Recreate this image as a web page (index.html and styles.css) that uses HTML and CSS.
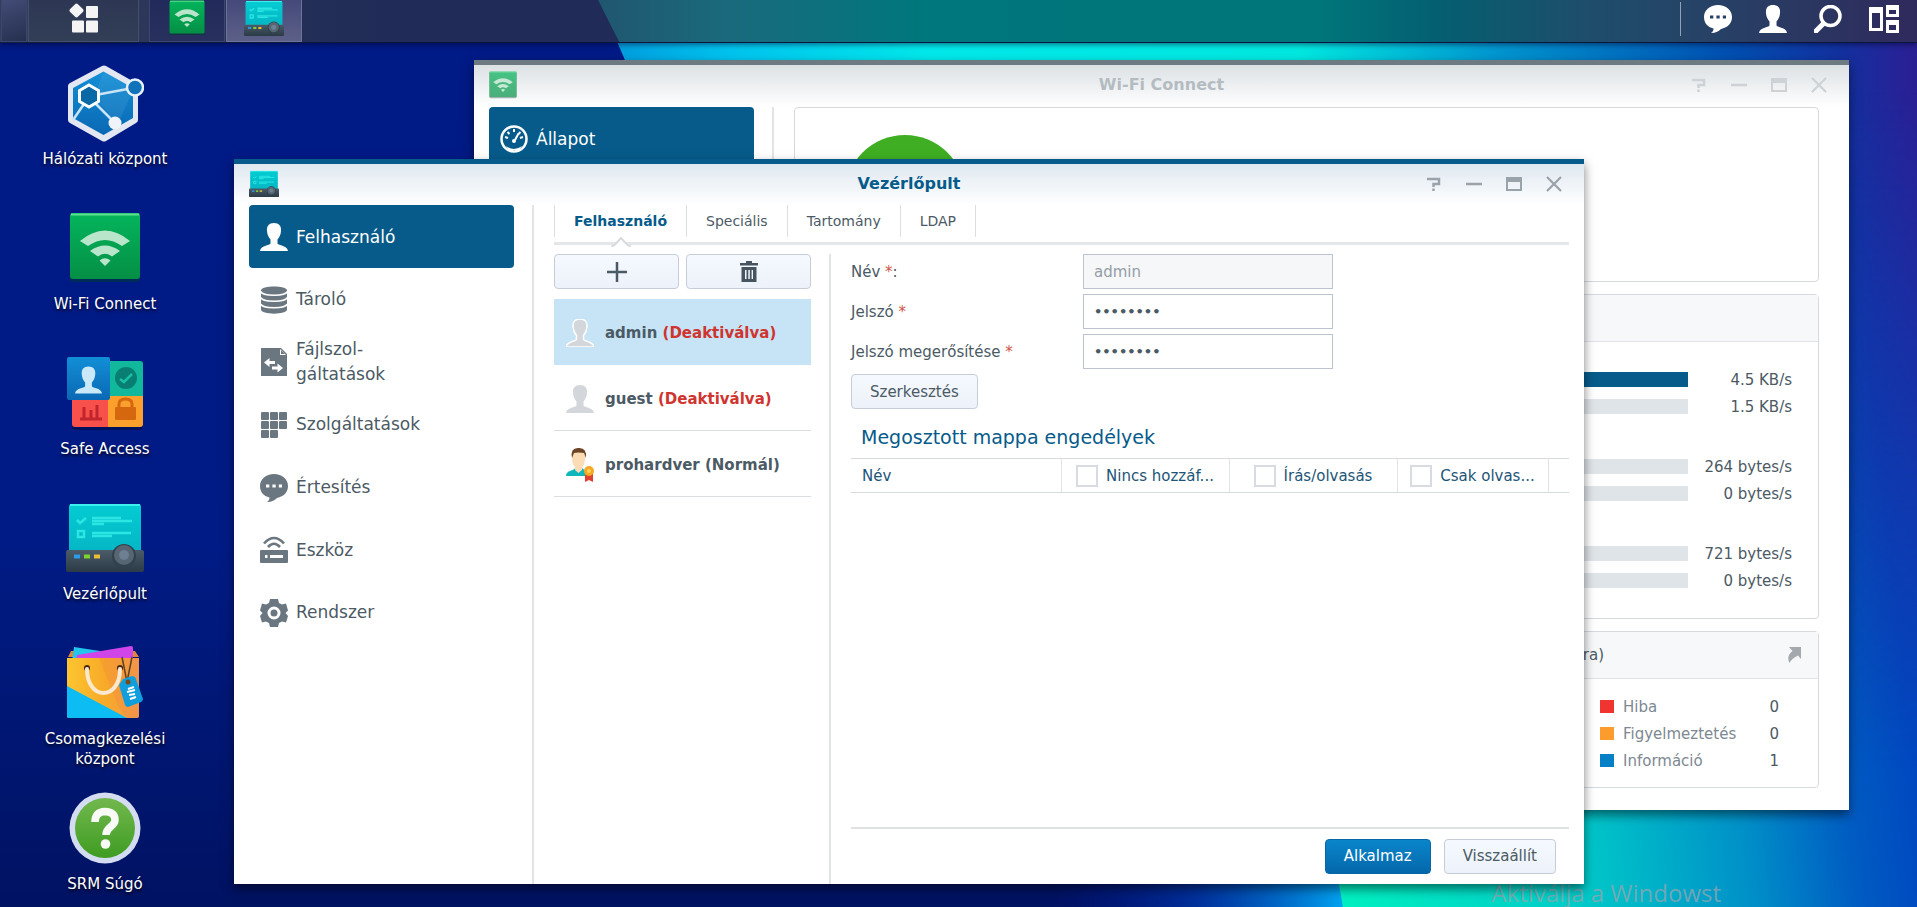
FILE: index.html
```html
<!DOCTYPE html>
<html lang="hu">
<head>
<meta charset="utf-8">
<title>SRM</title>
<link rel="stylesheet" href="styles.css">
</head>
<body>
<svg class="defs" width="0" height="0" aria-hidden="true">
  <defs>
    <linearGradient id="green" x2="0" y2="1"><stop stop-color="#04b55c"/><stop offset="1" stop-color="#048f45"/></linearGradient>
    <linearGradient id="teal" x2="0" y2="1"><stop stop-color="#04ccd2"/><stop offset="1" stop-color="#05b6c4"/></linearGradient>
    <linearGradient id="slate" x2="0" y2="1"><stop stop-color="#4b5b68"/><stop offset="1" stop-color="#2b3a47"/></linearGradient>
    <linearGradient id="blue" x2="0" y2="1"><stop stop-color="#128fd6"/><stop offset="1" stop-color="#0a68b4"/></linearGradient>
    <linearGradient id="help" x2="0" y2="1"><stop stop-color="#72b84e"/><stop offset="1" stop-color="#3f9c22"/></linearGradient>
    <linearGradient id="bag"><stop stop-color="#fdc52f"/><stop offset=".55" stop-color="#f7a928"/><stop offset="1" stop-color="#f59a52"/></linearGradient>
    <symbol id="i-wifi" viewBox="0 0 72 72">
      <rect x="1" y="3" width="70" height="67" rx="3" fill="#003a2a" opacity=".5"/>
      <rect x="1" y="1" width="70" height="66" rx="3" fill="url(#green)"/>
      <path d="M2 2.500h68" stroke="#5fe08f" stroke-width="2"/>
      <g fill="#b9e6cb"><path d="M11 29Q36 8 61 29L53 34Q36 22 19 34z"/><path d="M21 39Q36 28 51 39L43 44.500Q36 39 29 44.500z"/><path d="M30.500 48.500Q36 44 41.500 48.500L36 54z"/></g>
    </symbol>
    <symbol id="i-panel" viewBox="0 0 78 72">
      <path d="M3 50V5q0-3 3-3h66q3 0 3 3v45z" fill="url(#teal)"/>
      <path d="M4 3h70" stroke="#3cf0ee" stroke-width="2"/>
      <g fill="none" stroke="#2be6e2" stroke-width="2.500"><path d="M11 18l3 3 6-5M26 16h29M26 19h40M26 22h12M26 31h39M26 34h20M12 29h6v6h-6z"/></g>
      <rect y="48" width="78" height="22" rx="2" fill="url(#slate)"/>
      <path d="M8 54.500h6" stroke="#2d9be8" stroke-width="4"/><path d="M18 54.500h6" stroke="#7fd130" stroke-width="4"/><path d="M28 54.500h6" stroke="#e8bd38" stroke-width="4"/>
      <circle cx="58" cy="54" r="12" fill="#33404d"/><circle cx="58" cy="53" r="10" fill="#566672"/><circle cx="58" cy="53" r="5" fill="#6d7f92"/>
    </symbol>
    <symbol id="i-user" viewBox="0 0 28 28">
      <path d="M14 0c5 0 7.500 3 7 8-.3 4-1.500 6-3.500 8.500v4c1 2 10 2 10.500 7.500H0c.5-5.500 9.500-5.500 10.500-7.500v-4C8.500 14 7.300 12 7 8c-.5-5 2-8 7-8z"/>
    </symbol>
    <symbol id="i-chat" viewBox="0 0 28 28">
      <path fill-rule="evenodd" d="M14 0c8 0 14 5 14 12 0 6-4 10.500-11 12-2 2-5 4-10 4 2-1.500 2.500-3 2.500-4.500C3.500 22 0 18 0 12 0 5 6 0 14 0zM6 10.500v3h3.300v-3zm6.400 0v3h3.300v-3zm6.400 0v3H22v-3z"/>
    </symbol>
    <symbol id="w-help" viewBox="0 0 16 16"><path d="M1 3h12v5H7.500v3M7.500 12.500v2.500" fill="none" stroke="currentColor" stroke-width="2.500"/></symbol>
    <symbol id="w-min" viewBox="0 0 16 16"><path d="M0 8h16" stroke="currentColor" stroke-width="2.500"/></symbol>
    <symbol id="w-max" viewBox="0 0 16 16"><path d="M0 1h16v14H0zM2 6v7h12V6z" fill="currentColor" fill-rule="evenodd"/></symbol>
    <symbol id="w-close" viewBox="0 0 16 16"><path d="M1 1l14 14M15 1L1 15" stroke="currentColor" stroke-width="2.200"/></symbol>
  </defs>
</svg>

<svg class="wallpaper" viewBox="0 0 1917 907" preserveAspectRatio="none" aria-hidden="true">
  <defs>
    <linearGradient id="base" x2="0" y2="1"><stop stop-color="#001a86"/><stop offset=".6" stop-color="#001b85"/><stop offset="1" stop-color="#001262"/></linearGradient>
    <linearGradient id="ray" gradientUnits="userSpaceOnUse" x1="600" x2="1917" y1="0" y2="0"><stop stop-color="#0098dc"/><stop offset=".1" stop-color="#00c4ee"/><stop offset=".25" stop-color="#00e8ea"/><stop offset=".53" stop-color="#00e8e0"/><stop offset=".68" stop-color="#0096cf"/><stop offset=".85" stop-color="#0052b2"/><stop offset=".94" stop-color="#12319f"/><stop offset="1" stop-color="#2b1f94"/></linearGradient>
    <linearGradient id="low" gradientUnits="userSpaceOnUse" x1="1335" x2="1917" y1="860" y2="800"><stop stop-color="#00f0c0"/><stop offset=".4" stop-color="#00ccc8"/><stop offset=".7" stop-color="#0090c8"/><stop offset=".88" stop-color="#005cc2"/><stop offset="1" stop-color="#0048c0"/></linearGradient>
    <linearGradient id="fade" x2="0" y2="1"><stop offset=".1" stop-color="#000"/><stop offset=".85" stop-color="#fff"/></linearGradient>
    <mask id="lowmask"><rect width="1917" height="907" fill="url(#fade)"/></mask>
    <linearGradient id="glow" gradientUnits="userSpaceOnUse" x1="1050" x2="1340" y1="0" y2="0"><stop stop-color="#0018a0" stop-opacity="0"/><stop offset=".5" stop-color="#0044c0" stop-opacity=".6"/><stop offset="1" stop-color="#00a0ee"/></linearGradient>
  </defs>
  <rect width="1917" height="907" fill="url(#base)"/>
  <rect x="1050" y="700" width="300" height="207" fill="url(#glow)"/>
  <path d="M599 0L625 60Q1300 600 1343 907H1917V0z" fill="url(#ray)"/>
  <path d="M599 0L625 60Q1300 600 1343 907H1917V0z" fill="url(#low)" mask="url(#lowmask)"/>
</svg>

<header class="taskbar">
  <div class="task-group">
    <button class="task task-show" aria-label="Asztal megjelenítése"></button>
    <button class="task task-menu" aria-label="Főmenü"><svg width="30" height="30" viewBox="0 0 30 30" fill="#f4f4f5"><rect x="2" y="2" width="11" height="11" rx="2" transform="rotate(45 7.500 7.500)"/><rect x="17" y="3" width="12" height="12" rx="1"/><rect x="3" y="17.500" width="12" height="12" rx="1"/><rect x="17" y="17.500" width="12" height="12" rx="1"/></svg></button>
  </div>
  <div class="task-group">
    <button class="task" aria-label="Wi-Fi Connect"><svg width="36" height="36"><use href="#i-wifi"/></svg></button>
    <button class="task task-active" aria-label="Vezérlőpult"><svg width="40" height="37"><use href="#i-panel"/></svg></button>
  </div>
  <div class="tray">
    <button aria-label="Értesítések"><svg width="28" height="28"><use href="#i-chat"/></svg></button>
    <button aria-label="Fiók"><svg width="28" height="28"><use href="#i-user"/></svg></button>
    <button aria-label="Keresés"><svg width="28" height="28" viewBox="0 0 28 28" fill="none" stroke="#fff"><ellipse cx="16.500" cy="11" rx="9.500" ry="9.500" stroke-width="3.500"/><path d="M9 19l-7 7" stroke-width="5" stroke-linecap="round"/></svg></button>
    <button aria-label="Widgetek"><svg width="30" height="28" viewBox="0 0 30 28" fill-rule="evenodd"><path d="M0 2h14v24H0zM3 8v15h8V8z"/><path d="M17 0h13v12H17zm3 5v4h7V5z"/><path d="M17 15h13v13H17zm3 5v5h7v-5z"/></svg></button>
  </div>
</header>

<main class="desktop">
  <nav class="shortcuts">
    <a href="#halozat" class="shortcut">
      <svg width="78" height="78" viewBox="0 0 78 78"><path d="M36 2q2-1 4 0l30 17q2 1 2 3v34q0 2-2 3L40 77q-2 1-4 0L4 59q-2-1-2-3V22q0-2 2-3z" fill="#e3e7f1"/><path d="M37.500 7.500L67 24v30L37.500 71 7 54V24z" fill="url(#blue)"/><path d="M37.500 8L28 33l24 27 16-36zM7 54l17-23 14-23" fill="#fff" opacity=".07"/><g stroke="#c8e4f5" stroke-width="2.500"><path d="M24 32l43-8M24 34l25 25M20 37L7 56"/></g><path d="M23 21l9.500 5.500v11L23 43l-9.500-5.500v-11z" fill="#0869a6" stroke="#fff" stroke-width="3"/><circle cx="69" cy="23.500" r="8" fill="#1072b8" stroke="#e6f2fa" stroke-width="2.500"/><circle cx="49" cy="59" r="6.500" fill="#f0f4fa"/></svg>
      <span>Hálózati központ</span></a>
    <a href="#wifi" class="shortcut"><svg width="72" height="72"><use href="#i-wifi"/></svg><span>Wi-Fi Connect</span></a>
    <a href="#safe" class="shortcut">
      <svg width="78" height="74" viewBox="0 0 78 74"><rect x="6" y="7" width="71" height="67" rx="3" fill="#000" opacity=".3"/><path d="M42 5h32q3 0 3 3v32H42z" fill="#11b89c"/><path d="M42 40h35v28q0 3-3 3H42z" fill="#fba02c"/><path d="M6 40h36v31H9q-3 0-3-3z" fill="#f8504a"/><rect x="1" y="1" width="43" height="43" rx="2" fill="url(#blue)"/><g transform="translate(9 10)" fill="#c9e8f8"><use href="#i-user" width="27" height="28"/></g><circle cx="60" cy="22" r="11" fill="#087f72"/><path d="M54 23l4 3 8-8" fill="none" stroke="#18bfa2" stroke-width="2.500"/><path d="M14 63h22M18 63V51M25 63v-9M31 63V49" stroke="#c1262c" stroke-width="3"/><rect x="49" y="51" width="21" height="13" rx="1" fill="#d5680f"/><path d="M53 52v-4q0-5 6.500-5t6.500 5v4" fill="none" stroke="#d5680f" stroke-width="3"/></svg>
      <span>Safe Access</span></a>
    <a href="#vezerlopult" class="shortcut"><svg width="78" height="72"><use href="#i-panel"/></svg><span>Vezérlőpult</span></a>
    <a href="#csomag" class="shortcut">
      <svg width="80" height="76" viewBox="0 0 80 76"><path d="M3 12l3-6h64l4 6z" fill="#e0853a"/><path d="M9 2l26 4-2 10H7z" fill="#22c5ec"/><path d="M12 10l54-9q2 0 2 2v11H11z" fill="#cf45ea"/><path d="M2 13h72v58q0 2-2 2H4q-2 0-2-2z" fill="url(#bag)"/><path d="M34 13l20 50 8 10h10q2 0 2-2V13z" fill="#f08a3c" opacity=".35"/><path d="M2 41l60 32H4q-2 0-2-2z" fill="#0cbcf2"/><circle cx="22" cy="23" r="3" fill="#4a2508"/><circle cx="55" cy="23" r="3" fill="#4a2508"/><path d="M22 24c0 32 33 32 33 0" fill="none" stroke="#fbe9cf" stroke-width="4" stroke-linecap="round"/><path d="M57 12l5 25 5-25" fill="none" stroke="#5b4420" stroke-width="1.500"/><path d="M58 34l9-3q3 0 4 3l7 20q0 2-2 3l-13 5q-2 0-3-2l-6-20z" fill="#109fdc"/><circle cx="63" cy="37" r="2.500" fill="#7a4a14"/><path d="M63 44l6-2M62 47l8-2M64 50l6-1M65 54l6-2" stroke="#fff" stroke-width="2"/></svg>
      <span>Csomagkezelési központ</span></a>
    <a href="#sugo" class="shortcut">
      <svg width="72" height="72" viewBox="0 0 72 72"><circle cx="36" cy="36" r="35.500" fill="#d3dcf0"/><circle cx="36" cy="36" r="30" fill="url(#help)"/><path d="M26 30q0-10 10-10.500 10 .5 10 8.500c0 7-9 6-9 15" fill="none" stroke="#f8fbf5" stroke-width="7.500"/><circle cx="36.500" cy="52" r="4.800" fill="#f8fbf5"/></svg>
      <span>SRM Súgó</span></a>
  </nav>

  <p class="watermark">Aktiválja a Windowst</p>

  <section class="window window-wifi">
    <header class="titlebar">
      <svg class="app-icon" width="28" height="28"><use href="#i-wifi"/></svg>
      <h2>Wi-Fi Connect</h2>
      <div class="controls"><button aria-label="Súgó"><svg><use href="#w-help"/></svg></button><button aria-label="Kis méret"><svg><use href="#w-min"/></svg></button><button aria-label="Teljes méret"><svg><use href="#w-max"/></svg></button><button aria-label="Bezárás"><svg><use href="#w-close"/></svg></button></div>
    </header>
    <div class="window-body">
      <nav class="side"><a href="#allapot" class="side-item side-active"><svg width="28" height="28" viewBox="0 0 28 28" fill="none" stroke="#fff"><circle cx="14" cy="14" r="12.500" stroke-width="2.500"/><path d="M14 4v3M5 12l3 1M20 13l3-1M7.500 7l2 2M20.500 7l-2 2" stroke-width="2"/><path d="M18.500 8.500L15 15" stroke-width="2"/><circle cx="14" cy="16" r="2" fill="#fff" stroke="none"/><path d="M6 21q8 6 16 0l-3 4h-10z" fill="#fff" stroke="none"/></svg>Állapot</a></nav>
      <div class="wifi-content">
        <div class="card card-status"><svg width="120" height="120" viewBox="0 0 120 120"><circle cx="60" cy="60" r="60" fill="#3fae22"/></svg></div>
        <div class="card card-traffic">
          <div class="card-head"></div>
          <div class="traffic">
            <div class="pair"><div class="meter"><i class="bar bar-full"></i><span>4.5 KB/s</span></div><div class="meter"><i class="bar"></i><span>1.5 KB/s</span></div></div>
            <div class="pair"><div class="meter"><i class="bar"></i><span>264 bytes/s</span></div><div class="meter"><i class="bar"></i><span>0 bytes/s</span></div></div>
            <div class="pair"><div class="meter"><i class="bar"></i><span>721 bytes/s</span></div><div class="meter"><i class="bar"></i><span>0 bytes/s</span></div></div>
          </div>
        </div>
        <div class="card card-log">
          <div class="card-head"><span>(24 óra)</span><svg width="14" height="16" viewBox="0 0 14 16" fill="#a4a9ae"><path d="M2 0h12v12l-3-3.500Q5 11 2.500 16-1 9 5.500 4z"/></svg></div>
          <ul class="legend">
            <li><i class="red"></i><span>Hiba</span><b>0</b></li>
            <li><i class="orange"></i><span>Figyelmeztetés</span><b>0</b></li>
            <li><i class="azure"></i><span>Információ</span><b>1</b></li>
          </ul>
        </div>
      </div>
    </div>
  </section>

  <section class="window window-panel">
    <header class="titlebar">
      <svg class="app-icon" width="30" height="28"><use href="#i-panel"/></svg>
      <h1>Vezérlőpult</h1>
      <div class="controls"><button aria-label="Súgó"><svg><use href="#w-help"/></svg></button><button aria-label="Kis méret"><svg><use href="#w-min"/></svg></button><button aria-label="Teljes méret"><svg><use href="#w-max"/></svg></button><button aria-label="Bezárás"><svg><use href="#w-close"/></svg></button></div>
    </header>
    <div class="window-body">
      <nav class="side">
        <div class="side-list">
        <a href="#felhasznalo" class="side-item side-active"><svg width="28" height="28"><use href="#i-user"/></svg>Felhasználó</a>
        <a href="#tarolo" class="side-item"><svg width="28" height="28" viewBox="0 0 28 28"><path d="M1 4.500v19C1 29 27 29 27 23.500v-19C27-.8 1-.8 1 4.500z"/><path d="M1 5.500c1 5 25 5 26 0M1 11.500c1 5 25 5 26 0M1 18c1 5 25 5 26 0" fill="none" stroke="#fff" stroke-width="1.600"/></svg>Tároló</a>
        <a href="#fajl" class="side-item"><svg width="28" height="28" viewBox="0 0 28 28"><path d="M1 0h20l6 6v22H1z"/><path d="M20 1v6h6z" fill="#fff"/><path d="M21 2.500V6h4z"/><path d="M4 14.500l5.500-4.500v3H15v3H9.500v3zM23 20l-5.500-4.500v3H12v3h5.500v3z" fill="#fff"/></svg><span>Fájlszol-<br>gáltatások</span></a>
        <a href="#szolg" class="side-item"><svg width="28" height="28" viewBox="0 0 28 28"><g id="r"><rect x="1" y="1" width="8" height="8" rx="1"/><rect x="10" y="1" width="8" height="8" rx="1"/></g><rect x="19" y="1" width="8" height="8" rx="1"/><use href="#r" y="9"/><rect x="19" y="10" width="8" height="8" rx="1"/><use href="#r" y="18"/></svg>Szolgáltatások</a>
        <a href="#ertesites" class="side-item"><svg width="28" height="28"><use href="#i-chat"/></svg>Értesítés</a>
        <a href="#eszkoz" class="side-item"><svg width="28" height="28" viewBox="0 0 28 28"><path fill-rule="evenodd" d="M1 14h26q1 0 1 1v11q0 1-1 1H1q-1 0-1-1V15q0-1 1-1zm4 5v3h2.500v-3zm5 0v3h13v-3z"/><path d="M4 7.500Q14-3.500 24 7.500M8 11q6-6.500 12 0" fill="none" stroke="#6a7781" stroke-width="2.600"/></svg>Eszköz</a>
        <a href="#rendszer" class="side-item"><svg width="28" height="28" viewBox="0 0 28 28"><path fill-rule="evenodd" d="M10 0h8l1 4 3 1.500 4-1 2 7-2.500 2.500L28 17l-2 6.500-4-1-3 1.500-1 4h-8l-1-4-3-1.500-4 1L0 17l2.500-3L0 11.500l2-7 4 1L9 4zM14 7.500a6.500 6.500 0 100 13 6.500 6.500 0 000-13z"/><circle cx="14" cy="14" r="3.500"/></svg>Rendszer</a>
        </div>
      </nav>
      <div class="panel">
        <div class="tabs" role="tablist">
          <button role="tab" class="tab tab-on" aria-selected="true">Felhasználó<svg class="notch" width="20" height="10" viewBox="0 0 20 10"><path d="M0 9.500Q3 9 5 6.500L10 1l5 5.500Q17 9 20 9.500" fill="#fff" stroke="#d9dcdf" stroke-width="2"/></svg></button>
          <button role="tab" class="tab">Speciális</button>
          <button role="tab" class="tab">Tartomány</button>
          <button role="tab" class="tab">LDAP</button>
        </div>
        <div class="split">
          <div class="users">
            <div class="tools">
              <button class="btn" aria-label="Hozzáadás"><svg width="20" height="20" viewBox="0 0 20 20"><path d="M10 0v20M0 10h20" stroke="#4c5a65" stroke-width="2.500"/></svg></button>
              <button class="btn" aria-label="Törlés"><svg width="18" height="21" viewBox="0 0 18 21"><path d="M0 2h6V0h6v2h6v2.500H0zM1.500 6h15v15h-15zM5 9v9h1.500V9zm3.300 0v9h1.500V9zm3.300 0v9H13V9z" fill="#46545f" fill-rule="evenodd"/></svg></button>
            </div>
            <ul class="user-list">
              <li class="picked"><svg width="32" height="32" viewBox="-2 -2 32 32" fill="#d3d6da" stroke="#fff" stroke-width="1.500"><use href="#i-user" width="28" height="28"/></svg><span>admin <em>(Deaktiválva)</em></span></li>
              <li><svg width="32" height="32" viewBox="-2 -2 32 32" fill="#d3d6da"><use href="#i-user" width="28" height="28"/></svg><span>guest <em>(Deaktiválva)</em></span></li>
              <li><svg width="32" height="36" viewBox="0 0 32 36"><path d="M2 29c0-6 8-5 9-8h7c2 3 10 2 10 8z" fill="#0fb7bd"/><path d="M11 19h7v4l-3.500 3L11 23z" fill="#fcdcb4"/><path d="M8 6q6-5 13 0v7q-1 8-6.500 9Q9 21 8 13z" fill="#fcdcb4"/><path d="M8 11Q6 1 14 1q9-1 8 10l-2-5q-6-1-10 0z" fill="#6e4426"/><path d="M21 25h8v10l-4-2-4 2z" fill="#e0402f"/><circle cx="25" cy="24" r="5" fill="#f7a823"/><circle cx="25" cy="24" r="2" fill="#fbd35c"/></svg><span>prohardver (Normál)</span></li>
            </ul>
          </div>
          <div class="detail">
            <form class="form">
              <label for="nev">Név <i>*</i>:</label><input id="nev" type="text" value="admin" disabled>
              <label for="jelszo">Jelszó <i>*</i></label><input id="jelszo" type="password" value="password">
              <label for="jelszo2">Jelszó megerősítése <i>*</i></label><input id="jelszo2" type="password" value="password">
              <button type="button" class="btn btn-edit">Szerkesztés</button>
            </form>
            <h3>Megosztott mappa engedélyek</h3>
            <table class="perms">
              <colgroup><col class="c-name"><col class="c-perm"><col class="c-perm"><col class="c-read"><col></colgroup>
              <thead><tr>
                <th class="name">Név</th>
                <th><label><input type="checkbox">Nincs hozzáf...</label></th>
                <th><label><input type="checkbox">Írás/olvasás</label></th>
                <th><label><input type="checkbox">Csak olvas...</label></th>
                <th></th>
              </tr></thead>
            </table>
            <footer class="actions"><button class="btn btn-primary">Alkalmaz</button><button class="btn">Visszaállít</button></footer>
          </div>
        </div>
      </div>
    </div>
  </section>
</main>
</body>
</html>
```

FILE: styles.css
```css
* { box-sizing: border-box; }

body {
  margin: 0;
  height: 100vh;
  overflow: hidden;
  position: relative;
  display: flex;
  flex-direction: column;
  font: 15px/20px Verdana, "DejaVu Sans", sans-serif;
  color: #4b5a64;
}

button, input { font: inherit; color: inherit; }
button { cursor: pointer; }
a { color: inherit; text-decoration: none; }
h1, h2, h3, p, ul { margin: 0; padding: 0; }
ul { list-style: none; }
svg { display: block; flex: none; }

.defs { position: absolute; }

.wallpaper {
  position: absolute;
  inset: 0;
  width: 100%;
  height: 100%;
  z-index: -1;
}

/* Taskbar */
.taskbar {
  position: relative;
  flex: none;
  height: 43px;
  display: flex;
  gap: 10px;
  padding-left: 1px;
  background: linear-gradient(90deg, #333f58 0, #2b3659 8%, #202b57 20%);
  border-bottom: 1px solid rgba(0, 10, 50, 0.6);
  box-shadow: 0 2px 5px rgba(0, 0, 30, 0.45);
  z-index: 1;
}

.taskbar::before {
  content: "";
  position: absolute;
  inset: 0;
  clip-path: polygon(31.2% 0, 100% 0, 100% 100%, 32.3% 100%);
  background: linear-gradient(90deg, #20566f 31%, #1a6a7c 38%, #00777c 48%, #00757a 69%, #045f70 75%, #1c4f6b 82%, #274266 89%, #2f2a5c 100%);
}

.task-group { display: flex; gap: 1px; position: relative; }

.task {
  width: 76px;
  padding: 0;
  display: flex;
  justify-content: center;
  background: linear-gradient(180deg, #212a5a, #28305e);
  border: 1px solid #3b4673;
  border-top: 0;
}

.task-show { width: 26px; background: linear-gradient(160deg, #424c76, #25304f); }
.task-menu { width: 111px; padding-top: 3px; background: linear-gradient(180deg, #2d3754, #323e56); border-color: #434f6b; }
.task-active { background: linear-gradient(180deg, #45497a, #5c6088); border-color: #6e739a; }

.tray {
  position: relative;
  margin: 2px 18px 6px auto;
  padding-left: 23px;
  display: flex;
  gap: 27px;
  border-left: 1px solid #8fa3b8;
}

.tray button { padding: 0; border: 0; background: none; fill: #fff; }

/* Desktop */
.desktop { position: relative; flex: 1; min-height: 0; }

.shortcuts { width: 210px; padding-top: 20px; display: grid; grid-auto-rows: 145px; }

.shortcut {
  display: flex;
  flex-direction: column;
  align-items: center;
  gap: 6px;
  color: #fff;
  text-align: center;
  text-shadow: 0 2px 3px rgba(0, 0, 0, 0.8);
}

.shortcut svg { height: 80px; }
.shortcut span { width: 140px; }

.watermark {
  position: absolute;
  right: 196px;
  bottom: -2px;
  font: 24px/32px "Open Sans", sans-serif;
  color: rgba(150, 165, 175, 0.75);
}

/* Windows */
.window {
  position: absolute;
  display: flex;
  flex-direction: column;
  background: #fff;
  border-top: 5px solid #065b8a;
  box-shadow: 0 5px 10px rgba(0, 0, 0, 0.5);
}

.window-wifi { left: 474px; right: 68px; top: 17px; bottom: 97px; border-top-color: #6e7a82; }
.window-panel { left: 234px; right: 333px; top: 116px; bottom: 23px; }

.titlebar {
  flex: none;
  height: 41px;
  display: grid;
  grid-template-columns: 1fr auto 1fr;
  align-items: center;
  padding: 0 15px 2px;
  background: linear-gradient(180deg, #dfe8f0, #fff);
  color: #9aa2aa;
}

.titlebar h1, .titlebar h2 { font-size: 16px; line-height: 20px; font-weight: bold; }
.titlebar h1 { color: #065b8a; }
.window-wifi .titlebar { height: 42px; background: linear-gradient(180deg, #dce1e4, #fff); color: #ced2d6; }
.window-wifi h2 { color: #b4bcc2; }
.window-wifi .app-icon { opacity: 0.7; }

.controls { display: flex; gap: 24px; justify-content: flex-end; padding-right: 7px; }
.controls button { padding: 0; border: 0; background: none; }
.controls svg { width: 16px; height: 16px; }

.window-body { flex: 1; min-height: 0; display: flex; padding-left: 15px; }

.side {
  flex: none;
  width: 285px;
  padding-right: 18px;
  border-right: 2px solid #e3e4e6;
  fill: #6a7781;
}

.side-list { height: 438px; display: grid; grid-template-rows: repeat(7, 1fr); }

.side-item {
  min-height: 62px;
  display: flex;
  align-items: center;
  gap: 8px;
  padding: 2px 0 0 11px;
  font-size: 17px;
  line-height: 25px;
}

.side-active { background: #065b8a; border-radius: 4px; color: #fff; fill: #fff; }

/* Wi-Fi Connect */
.wifi-content { flex: 1; display: flex; flex-direction: column; gap: 12px; padding: 0 30px 22px 20px; }
.card { border: 1px solid #d6dade; border-radius: 4px; }
.card-status { height: 175px; padding: 27px 50px; overflow: hidden; }
.card-traffic { flex: 1; }
.card-log { height: 157px; }

.card-head {
  height: 47px;
  display: flex;
  align-items: center;
  justify-content: flex-end;
  gap: 183px;
  padding: 0 17px;
  background: #f6f8fa;
  border-bottom: 1px solid #dfe3e7;
}

.traffic { padding: 24px 26px 0 17px; display: flex; flex-direction: column; gap: 33px; }
.meter { height: 27px; display: flex; align-items: center; justify-content: flex-end; }
.meter span { width: 104px; text-align: right; }
.bar { flex: 1; height: 15px; background: #dfe4e8; }
.bar-full { background: #065b8a; }

.legend { padding: 14px 39px 0 0; display: flex; flex-direction: column; align-items: flex-end; }
.legend li { width: 179px; height: 27px; display: flex; align-items: center; gap: 9px; }
.legend i { width: 14px; height: 13px; }
.legend span { flex: 1; color: #7d8892; }
.legend b { font-weight: normal; }
.red { background: #f03530; }
.orange { background: #fb9c2c; }
.azure { background: #0580c6; }

/* Control panel */
.panel { flex: 1; min-width: 0; display: flex; flex-direction: column; padding: 0 15px 0 20px; }

.tabs { flex: none; height: 40px; display: flex; border-bottom: 3px solid #e4e6e8; }

.tab {
  position: relative;
  height: 32px;
  padding: 0 19px;
  border: 0;
  border-right: 1px solid #dcdfe2;
  background: none;
  font-size: 14px;
}

.tab-on { border-left: 1px solid #dcdfe2; color: #065b8a; font-weight: bold; }
.notch { position: absolute; left: calc(50% - 10px); bottom: -10px; }

.split { flex: 1; min-height: 0; display: flex; padding-top: 9px; }

.users { flex: none; width: 277px; padding-right: 18px; border-right: 2px solid #e3e4e6; }
.tools { display: grid; grid-template-columns: 1fr 1fr; gap: 7px; }

.btn {
  height: 35px;
  padding: 0 18px;
  display: flex;
  align-items: center;
  justify-content: center;
  border: 1px solid #c6cdd8;
  border-radius: 4px;
  background: linear-gradient(180deg, #f5f9ff, #edf2fa);
}

.user-list { margin-top: 10px; }

.user-list li {
  height: 66px;
  display: flex;
  align-items: center;
  gap: 9px;
  padding: 2px 0 0 10px;
  border-bottom: 1px solid #d9dee3;
  font-weight: bold;
}

.user-list .picked { background: #c6e4f5; border-color: #c6e4f5; }
.user-list em { font-style: normal; color: #d0342f; }

.detail { flex: 1; min-width: 0; display: flex; flex-direction: column; padding-left: 20px; }

.form {
  display: grid;
  grid-template-columns: 232px 250px;
  gap: 5px 0;
  align-items: center;
}

.form i { font-style: normal; color: #d05548; }

.form input {
  width: 100%;
  height: 35px;
  padding: 0 10px;
  border: 1px solid #bcc4cf;
  border-radius: 0;
  background: #fff;
}

.form input[type="password"] { font-size: 13px; font-weight: bold; }
.form input:disabled { background: #f5f7f9; color: #949da5; }
.btn-edit { justify-self: start; }

.detail h3 { margin: 16px 0 0 10px; font-size: 19px; line-height: 24px; font-weight: normal; color: #065b8a; }

.perms {
  width: 100%;
  margin-top: 9px;
  table-layout: fixed;
  border-collapse: collapse;
  border-top: 1px solid #d6dade;
  border-bottom: 1px solid #d6dade;
  color: #1d5577;
}

.c-name { width: 210px; }
.c-perm { width: 168px; }
.c-read { width: 151px; }
.perms th { height: 34px; padding: 0; border-right: 1px solid #e0e3e6; font-weight: normal; white-space: nowrap; }
.perms th:last-child { border-right: 0; }
.perms .name { padding-left: 11px; text-align: left; }
.perms label { display: flex; align-items: center; justify-content: center; gap: 8px; }
.perms input { appearance: none; margin: 0; width: 22px; height: 22px; border: 2px solid #d8dce2; background: #fff; }

.actions {
  margin-top: auto;
  height: 57px;
  padding: 0 13px 1px 0;
  display: flex;
  align-items: center;
  justify-content: flex-end;
  gap: 13px;
  border-top: 2px solid #dfe1e3;
}

.btn-primary { border-color: #0566a8; background: linear-gradient(180deg, #0a86cb, #0467ab); color: #fff; }
```
